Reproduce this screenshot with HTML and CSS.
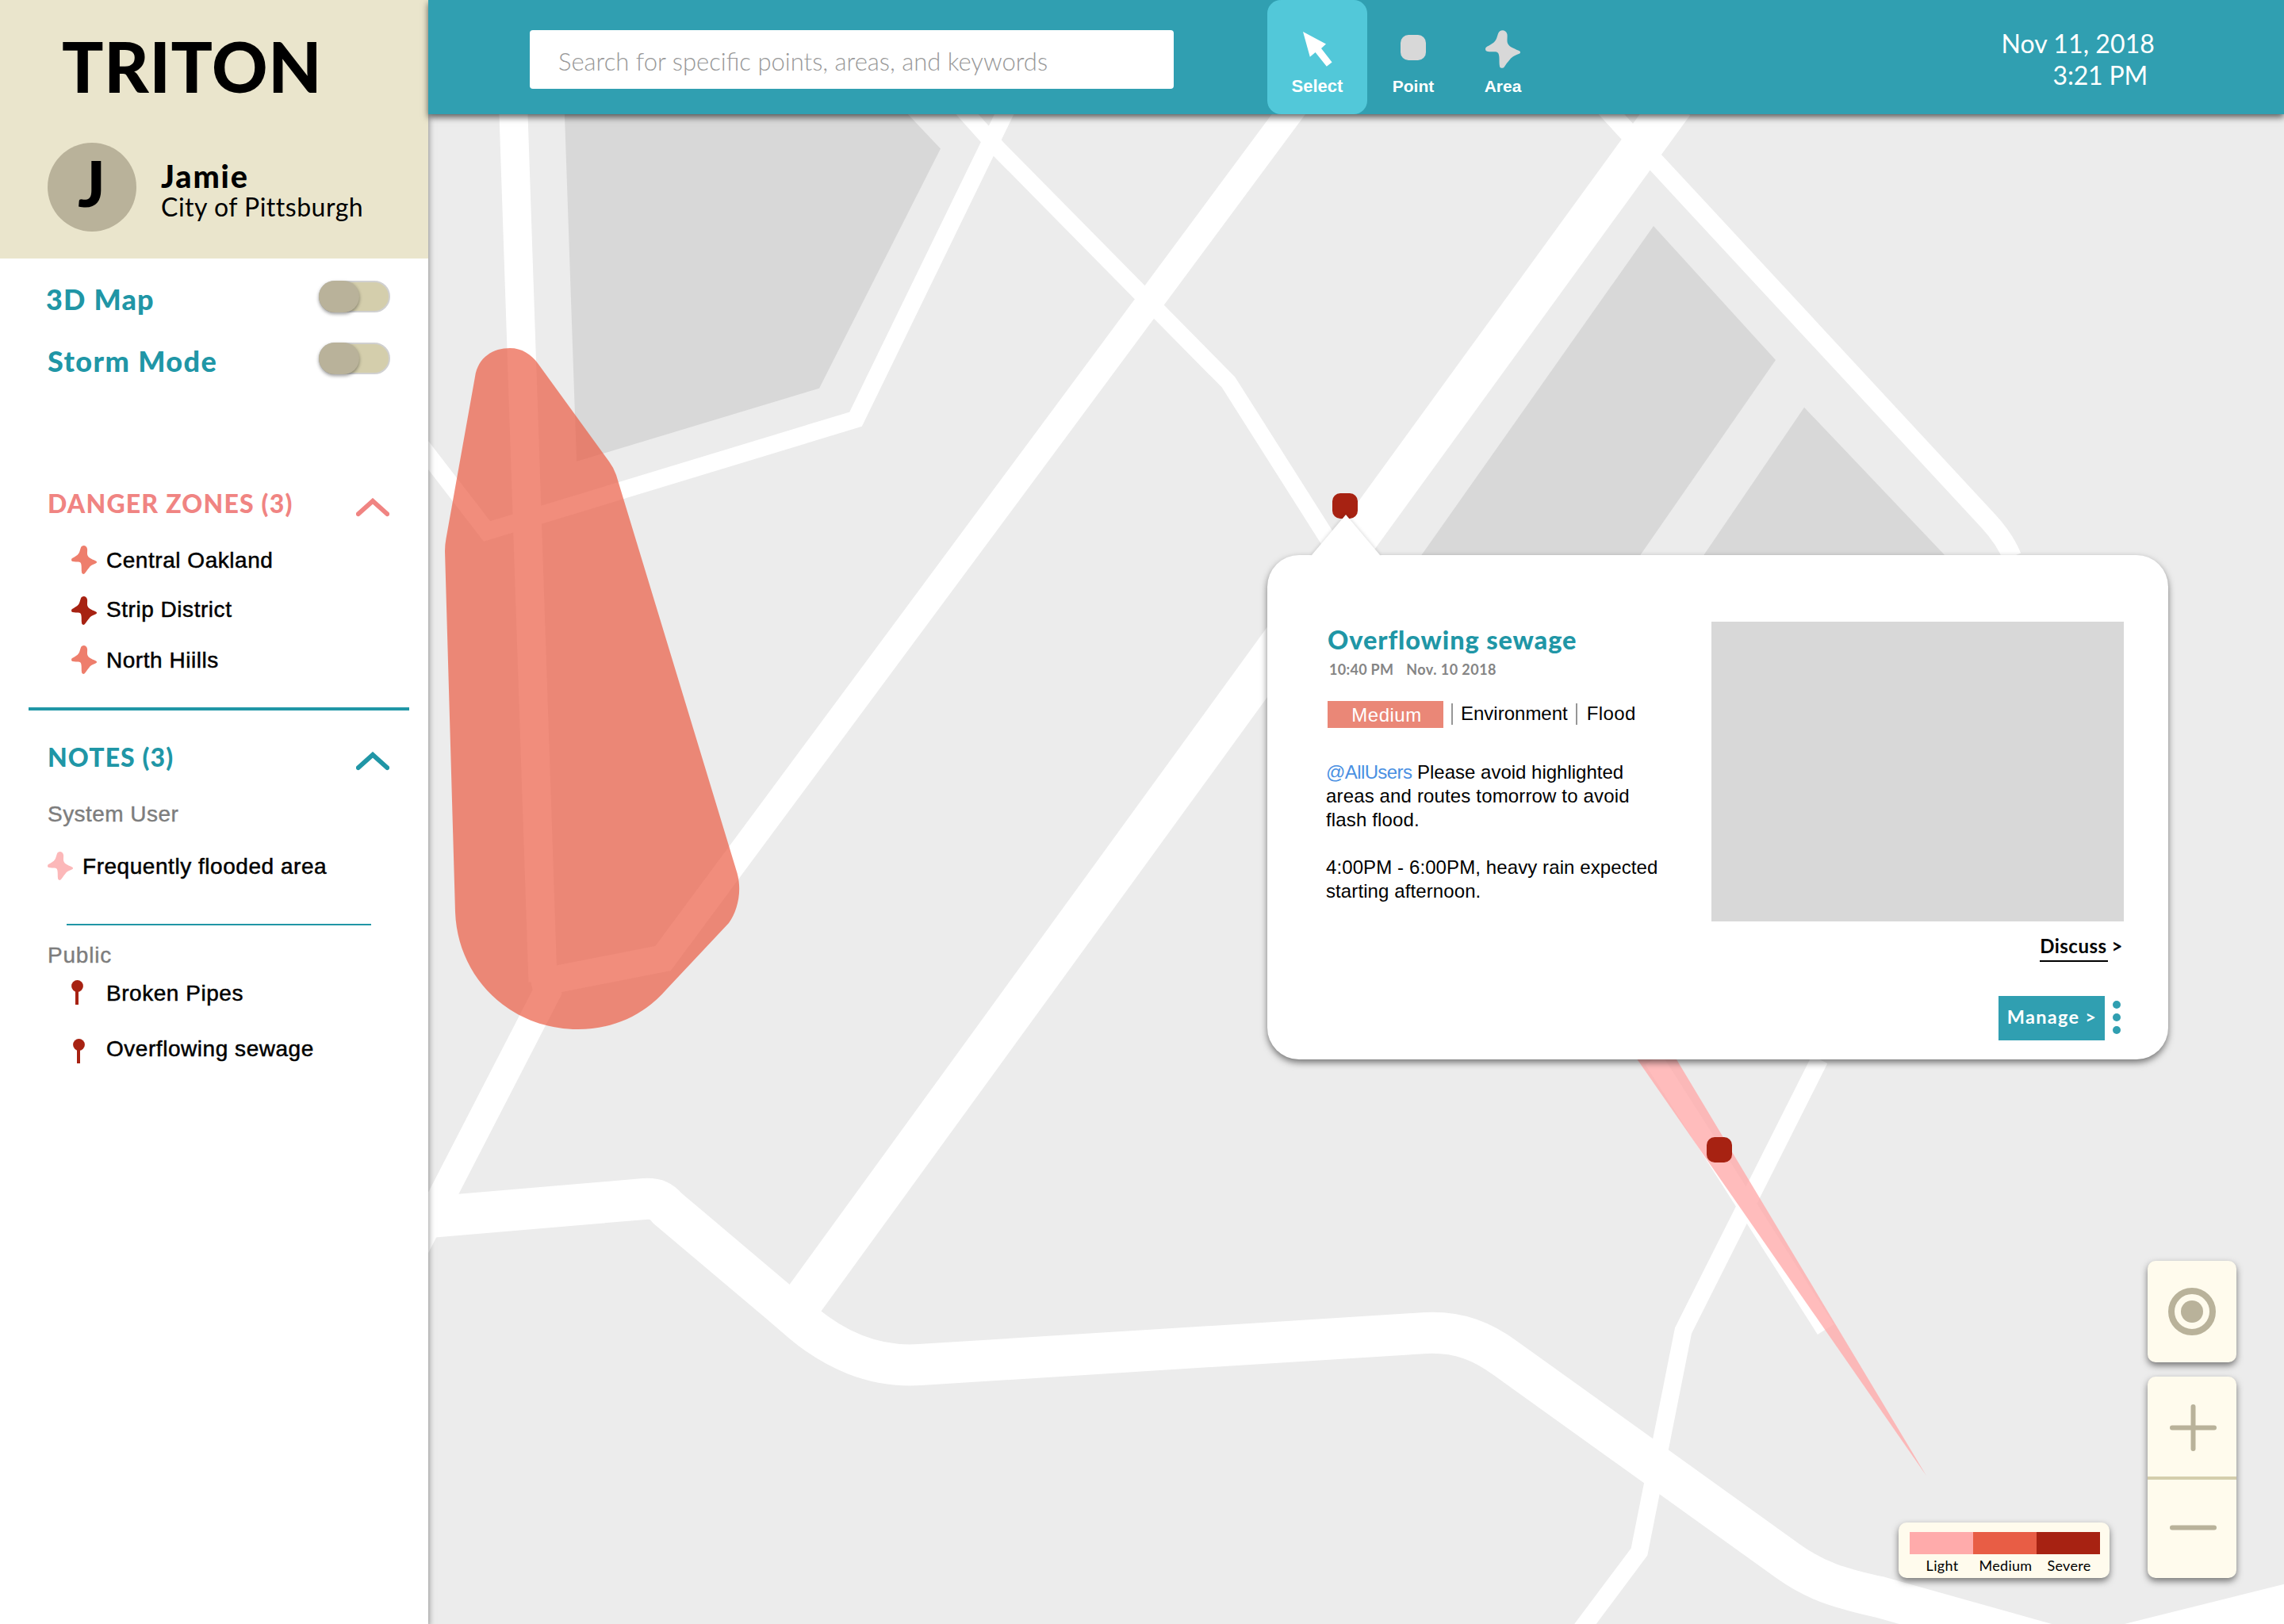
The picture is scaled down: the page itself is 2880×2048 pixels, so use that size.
FILE: index.html
```html
<!DOCTYPE html>
<html lang="en">
<head>
<meta charset="utf-8">
<title>Triton</title>
<link rel="stylesheet" href="styles.css">
</head>
<body>
<svg class="defs" width="0" height="0" aria-hidden="true">
  <symbol id="area" viewBox="0 0 32 36.4" preserveAspectRatio="none">
    <path d="M11.8 3C13-1 19-1 20 4C20.4 7 19.5 10 20.4 12.5C21.5 15.5 24 16.5 31 19.8C32.5 20.6 32.3 21.9 31 22.6C27 24.5 25 25 22.5 28C20 31 19 32.5 17.4 35C16.4 36.7 14 36.7 13.2 35C12.3 31 13.2 27 12.3 23.5C11.8 21.5 11 20.9 8.5 20.7C6 20.5 4 20.9 1.5 20.2C-.3 19.6-.4 17.2 1 16.2C4 14 7.5 13 9.5 9.5C10.8 7 11 5 11.8 3Z"/>
  </symbol>
  <symbol id="pin" viewBox="0 0 15 31">
    <circle cx="7.5" cy="7.5" r="7.4"/><rect x="5" y="10" width="4" height="21"/>
  </symbol>
  <symbol id="chevron" viewBox="0 0 42 24">
    <path d="M2.8 20.2L21 3.8L39.2 20.2" fill="none" stroke="currentColor" stroke-width="5.8" stroke-linecap="round"/>
  </symbol>
</svg>
<div class="app">
  <aside class="sidebar">
    <header class="brand">
      <h1 class="logo">TRITON</h1>
      <div class="user">
        <div class="avatar">J</div>
        <div class="who">
          <div class="name">Jamie</div>
          <div class="org">City of Pittsburgh</div>
        </div>
      </div>
    </header>

    <div class="modes">
      <div class="mode"><span class="mode-label">3D Map</span><span class="toggle"><span class="knob"></span></span></div>
      <div class="mode"><span class="mode-label storm">Storm Mode</span><span class="toggle"><span class="knob"></span></span></div>
    </div>

    <section class="danger">
      <h2 class="heading coral"><span>DANGER ZONES (3)</span><svg class="chevron"><use href="#chevron"/></svg></h2>
      <ul class="list zones">
        <li class="item"><svg class="ic-area medium"><use href="#area"/></svg><span>Central Oakland</span></li>
        <li class="item second"><svg class="ic-area severe"><use href="#area"/></svg><span>Strip District</span></li>
        <li class="item"><svg class="ic-area medium"><use href="#area"/></svg><span>North Hiills</span></li>
      </ul>
    </section>
    <hr class="rule">

    <section class="notes">
      <h2 class="heading teal"><span class="tight">NOTES (3)</span><svg class="chevron"><use href="#chevron"/></svg></h2>
      <h3 class="group">System User</h3>
      <ul class="list flooded">
        <li class="item"><svg class="ic-area light"><use href="#area"/></svg><span>Frequently flooded area</span></li>
      </ul>
      <hr class="rule thin">
      <h3 class="group public">Public</h3>
      <ul class="list reports">
        <li class="item"><svg class="ic-pin"><use href="#pin"/></svg><span>Broken Pipes</span></li>
        <li class="item lower"><svg class="ic-pin"><use href="#pin"/></svg><span>Overflowing sewage</span></li>
      </ul>
    </section>
  </aside>

  <header class="topbar">
    <div class="search">Search for specific points, areas, and keywords</div>
    <nav class="tools">
      <div class="tool select active">
        <svg class="ic-cursor" viewBox="0 0 37 44"><path d="M0 0L29 15.6L23 21L36.6 38.4L29.8 43.8L15.6 26L8.8 31.8Z"/></svg>
        <span>Select</span>
      </div>
      <div class="tool point"><span class="ic-point"></span><span>Point</span></div>
      <div class="tool area"><svg class="ic-shape"><use href="#area"/></svg><span>Area</span></div>
    </nav>
    <div class="clock"><div>Nov 11, 2018</div><div class="time">3:21 PM</div></div>
  </header>

  <main class="map">
    <svg class="canvas" viewBox="540 144 2340 1904" width="2340" height="1904">
      <g class="park">
        <path d="M711.8 140L1141 140L1186 187.4L1033 489.7L727 582Z"/>
        <path d="M2085 285L2239 454L2067 702L1791 702Z"/>
        <path d="M2275 513.7L2454 702L2147 702Z"/>
      </g>
      <g class="road">
        <path stroke-width="36" d="M647 130L684.5 1238"/>
        <path stroke-width="35" stroke-linejoin="miter" d="M524 1573L690 1251L684.5 1225"/>
        <path stroke-width="34" d="M676 1240L836 1208.5L1636 129"/>
        <path stroke-width="22" d="M530 561L614 670L1079 528.7L1273 130"/>
        <path stroke-width="21" d="M1207 130L1258 187L1549 482L1710 736"/>
        <path stroke-width="52" d="M2110 130L1008 1647"/>
        <path stroke-width="24" d="M2019 130L2087 204L2508 658Q2528 680 2537 702"/>
        <path stroke-width="52" d="M530 1536L812 1512C828 1511 834 1515 842 1524L984 1644L1012 1668C1050 1700 1100 1725 1160 1721L1798 1681C1840 1679 1870 1692 1898 1712.6L2255 1969C2290 1994 2320 2003 2370 2014L2630 2087L2890 2022"/>
        <path stroke-width="22" d="M2294.5 1336L2122.5 1678L2067 1957L1990 2060"/>
        <path stroke-width="24" d="M2085 1336L2302 1676.5"/>
      </g>
      <path class="zone-light" d="M2064.5 1336L2114 1336L2429 1861Z"/>
      <path class="zone-medium" d="M599 475C603 450 622 439 643 439C658 439 670 447 678 458L768 582Q774 590 777 599L929.5 1101C936 1124 930 1149 919 1164L841 1247C812 1281 772 1298 729 1298C643 1298 577 1233 574 1150L561 695Q561 687 562.5 679Z"/>
      <rect class="marker" x="1680" y="622" width="32" height="32" rx="10"/>
      <rect class="marker" x="2152" y="1434" width="32" height="32" rx="10"/>
    </svg>

    <article class="card">
      <svg class="tip" viewBox="0 0 86 52"><path d="M0 51L43 0L86 51V52H0Z"/></svg>
      <div class="details">
        <h2 class="title">Overflowing sewage</h2>
        <div class="stamp"><span>10:40 PM</span><span class="day">Nov. 10 2018</span></div>
        <div class="tags">
          <span class="badge">Medium</span>
          <span class="tag">Environment</span>
          <span class="tag flood">Flood</span>
        </div>
        <p class="text"><span class="first"><a class="mention">@AllUsers</a> Please avoid highlighted</span><br>areas and routes tomorrow to avoid<br>flash flood.</p>
        <p class="text">4:00PM - 6:00PM, heavy rain expected<br>starting afternoon.</p>
      </div>
      <div class="side">
        <div class="photo"></div>
        <div class="discuss"><span class="underlined">Discuss</span><span>&gt;</span></div>
        <div class="actions">
          <div class="manage">Manage &gt;</div>
          <div class="more"><i></i><i></i><i></i></div>
        </div>
      </div>
    </article>

    <div class="legend">
      <div class="scale"><i class="s1"></i><i class="s2"></i><i class="s3"></i></div>
      <div class="labels"><span>Light</span><span>Medium</span><span>Severe</span></div>
    </div>

    <div class="controls">
      <div class="control locate"><svg width="60" height="60"><circle cx="30" cy="30" r="26" fill="none" stroke="currentColor" stroke-width="8"/><circle cx="30" cy="30" r="14" fill="currentColor"/></svg></div>
      <div class="control zoom">
        <div class="zoom-in"><svg width="59" height="59"><path d="M3 29.5H56M29.5 3V56"/></svg></div>
        <div class="zoom-out"><svg width="59" height="7"><path d="M3 3.5H56"/></svg></div>
      </div>
    </div>
  </main>
</div>
</body>
</html>
```
FILE: styles.css
```css
* { box-sizing: border-box; }
body { margin: 0; width: 2880px; height: 2048px; overflow: hidden; background: #fff; color: #000; font-family: "Lato", sans-serif; }
h1, h2, h3, p, ul { margin: 0; padding: 0; }
ul { list-style: none; }
svg { display: block; flex: none; }
.defs { position: absolute; }

.app { display: grid; grid-template-columns: 540px 2340px; grid-template-rows: 144px 1904px; }

/* Sidebar */
.sidebar { grid-row: 1 / 3; position: relative; z-index: 2; background: #fff; box-shadow: 0 4px 8px rgba(0, 0, 0, .5); }
.brand { height: 326px; padding-top: 44px; background: #eae5cc; }
.logo { padding-left: 78px; font-size: 87px; line-height: 80px; font-weight: 900; letter-spacing: .7px; }
.user { display: flex; gap: 31px; margin: 56px 0 0 60px; }
.avatar { width: 112px; height: 112px; padding-right: 1px; border-radius: 50%; background: #b9b29a; text-align: center; font-size: 80px; line-height: 100px; font-weight: 900; }
.who { padding-top: 23px; white-space: nowrap; }
.name { font-size: 39.5px; line-height: 38px; font-weight: 900; letter-spacing: 1.9px; }
.org { font-size: 32px; line-height: 39px; letter-spacing: .5px; }

.modes { display: flex; flex-direction: column; gap: 38px; padding: 28px 48px 0 58px; color: #2096a6; }
.mode { display: flex; justify-content: space-between; height: 40px; }
.mode-label { font-size: 36px; line-height: 47px; font-weight: 900; letter-spacing: 1.2px; white-space: nowrap; }
.storm { padding-left: 2px; letter-spacing: 1.4px; }
.toggle { display: block; width: 90px; height: 40px; border: 2px solid #d0d0d0; border-radius: 20px; background: #d4ceac; }
.knob { display: block; width: 51px; height: 40px; margin: -2px 0 0 -2px; border-radius: 20px; background: #b9b29a; box-shadow: 0 2px 4px rgba(0, 0, 0, .4); }

.danger { padding-top: 142px; }
.notes { padding-top: 38px; }
.heading { display: flex; justify-content: space-between; height: 40px; padding: 0 49px 0 60px; font-size: 32px; line-height: 42px; font-weight: 900; letter-spacing: 1.2px; }
.heading .tight { letter-spacing: 1.1px; }
.coral { color: #f08482; }
.teal { color: #2096a6; }
.chevron { width: 42px; height: 24px; margin-top: 14px; }
.list { display: flex; flex-direction: column; font: 28px/37px "Liberation Sans", sans-serif; letter-spacing: .54px; }
.item { display: flex; height: 36px; white-space: nowrap; -webkit-text-stroke: .5px #000; }
.zones { padding: 34px 0 0 90px; gap: 26px; }
.zones .item { gap: 12px; }
.zones .second { margin-top: 2px; line-height: 33px; }
.ic-area { width: 32px; height: 36px; }
.medium { fill: #ee7e6c; }
.severe { fill: #a72212; }
.light { fill: #fcb8b9; }
.rule { height: 4px; margin: 42px 24px 0 36px; border: 0; background: #2096a6; }
.rule.thin { height: 2px; margin: 55px 72px 0 84px; }
.group { height: 36px; margin-top: 34px; padding-left: 60px; color: #7d7d7d; font: 28px/37px "Liberation Sans", sans-serif; letter-spacing: .45px; -webkit-text-stroke: .4px #7d7d7d; }
.public { margin-top: 19px; letter-spacing: .8px; }
.flooded { padding: 30px 0 0 60px; }
.flooded .item { gap: 12px; }
.reports { gap: 34px; padding: 12px 0 0 90px; }
.reports .item { gap: 29px; }
.ic-pin { width: 15px; height: 31px; margin-top: 2px; fill: #a72212; }
.lower .ic-pin { margin: 6px -2px 0 2px; }

/* Top bar */
.topbar { position: relative; z-index: 3; display: flex; background: #309fb1; color: #fff; box-shadow: 0 4px 8px rgba(0, 0, 0, .6); }
.search { width: 812px; height: 74px; margin: 38px 0 0 128px; padding: 2px 0 0 36px; border-radius: 4px; background: #fff; color: #989898; font-size: 31px; line-height: 74px; font-weight: 300; }
.tools { display: flex; margin-left: 118px; font: bold 21px/28px "Liberation Sans", sans-serif; text-align: center; }
.tool { display: flex; flex-direction: column; align-items: center; justify-content: flex-end; height: 144px; padding-bottom: 21px; }
.select { width: 126px; font-size: 22px; }
.point { width: 116px; }
.area { width: 110px; }
.active { border-radius: 17px; background: #52c8d9; }
.ic-cursor { width: 37px; height: 44px; margin-bottom: 11px; fill: #fff; }
.ic-point { width: 32px; height: 32px; margin-bottom: 19px; border-radius: 10px; background: #d8d8d8; }
.ic-shape { width: 44px; height: 48px; margin-bottom: 9px; fill: #d8d8d8; }
.clock { margin-left: auto; padding: 35px 163px 0 0; font-size: 32px; line-height: 40px; letter-spacing: .1px; text-align: right; }
.time { padding-right: 9px; letter-spacing: -.2px; }

/* Map */
.map { position: relative; background: #ececec; overflow: hidden; }
.canvas { width: 2340px; height: 1904px; }
.park { fill: #d8d8d8; }
.road { fill: none; stroke: #fff; }
.zone-light { fill: #ffabab; fill-opacity: .8; }
.zone-medium { fill: #eb5c44; fill-opacity: .7; }
.marker { fill: #a72212; }

.card { position: absolute; left: 1058px; top: 556px; width: 1136px; height: 636px; display: grid; grid-template-columns: 486px 520px; padding: 84px 56px 0 74px; border-radius: 40px; background: #fff; box-shadow: 0 4px 8px rgba(0, 0, 0, .5); }
.tip { position: absolute; left: 56px; top: -51px; width: 86px; height: 52px; fill: #fff; overflow: visible; filter: drop-shadow(0 -1px 2px rgba(0, 0, 0, .15)); clip-path: inset(-8px -8px 0 -8px); }
.title { padding: 3px 0 0 2px; color: #2096a6; font-size: 32.5px; line-height: 40px; font-weight: 900; letter-spacing: .9px; }
.stamp { display: flex; gap: 16px; margin-top: 5px; padding-left: 4px; color: #858585; font-size: 18px; line-height: 24px; font-weight: 700; letter-spacing: .3px; }
.day { letter-spacing: .45px; }
.tags { display: flex; height: 34px; margin: 28px 0 0 2px; font: 24px/32px "Liberation Sans", sans-serif; }
.badge { width: 146px; padding: 1px 0 0 3px; background: #ea8777; color: #fff; line-height: 34px; letter-spacing: .5px; text-align: center; }
.tag { display: flex; gap: 10px; margin-left: 10px; }
.tag::before { content: ""; width: 2px; height: 27px; margin-top: 3px; background: #979797; }
.flood { margin-left: 10px; gap: 12px; letter-spacing: .4px; }
.text { font: 24px/30px "Liberation Sans", sans-serif; letter-spacing: .15px; margin-top: 41px; }
.text + .text { margin-top: 30px; letter-spacing: .1px; }
.first { letter-spacing: 0; }
.mention { color: #4a90e2; letter-spacing: -.6px; }
.photo { height: 378px; background: #d8d8d8; }
.discuss { display: flex; justify-content: flex-end; gap: 5px; height: 34px; margin-top: 17px; padding-right: 1px; font-size: 24px; line-height: 28px; font-weight: 700; letter-spacing: .5px; }
.underlined { padding-right: 1px; border-bottom: 2px solid #000; }
.actions { display: flex; justify-content: flex-end; gap: 10px; height: 56px; margin-top: 43px; padding-right: 4px; }
.manage { width: 134px; padding-left: 1px; background: #309fb1; color: #fff; font-size: 23.5px; line-height: 52px; font-weight: 700; letter-spacing: 1.3px; text-align: center; white-space: nowrap; }
.more { display: flex; flex-direction: column; gap: 6px; padding-top: 6px; }
.more i { width: 10px; height: 10px; border-radius: 50%; background: #309fb1; }

.legend { position: absolute; left: 1854px; top: 1776px; width: 266px; height: 70px; padding: 12px 12px 0 14px; border-radius: 10px; background: #fffbed; box-shadow: 0 4px 8px rgba(0, 0, 0, .5); }
.scale, .labels { display: grid; grid-template-columns: repeat(3, 80px); }
.scale { height: 28px; }
.s1 { background: #ffabab; }
.s2 { background: #e85d45; }
.s3 { background: #a72212; }
.labels { padding: 2px 0 0 1px; text-align: center; font-size: 18px; line-height: 24px; letter-spacing: .3px; }

.controls { position: absolute; left: 2168px; top: 1446px; display: flex; flex-direction: column; gap: 18px; }
.control { width: 112px; border-radius: 10px; background: #fffbed; color: #b9b29a; box-shadow: 0 4px 8px rgba(0, 0, 0, .5); }
.locate { display: grid; place-items: center; height: 128px; }
.zoom { height: 254px; fill: none; stroke: #b9b29a; stroke-width: 6; stroke-linecap: round; }
.zoom-in, .zoom-out { display: flex; justify-content: center; padding-left: 3px; }
.zoom-in { height: 130px; padding-top: 35px; border-bottom: 4px solid #d4ceac; }
.zoom-out { padding-top: 57px; }
```
